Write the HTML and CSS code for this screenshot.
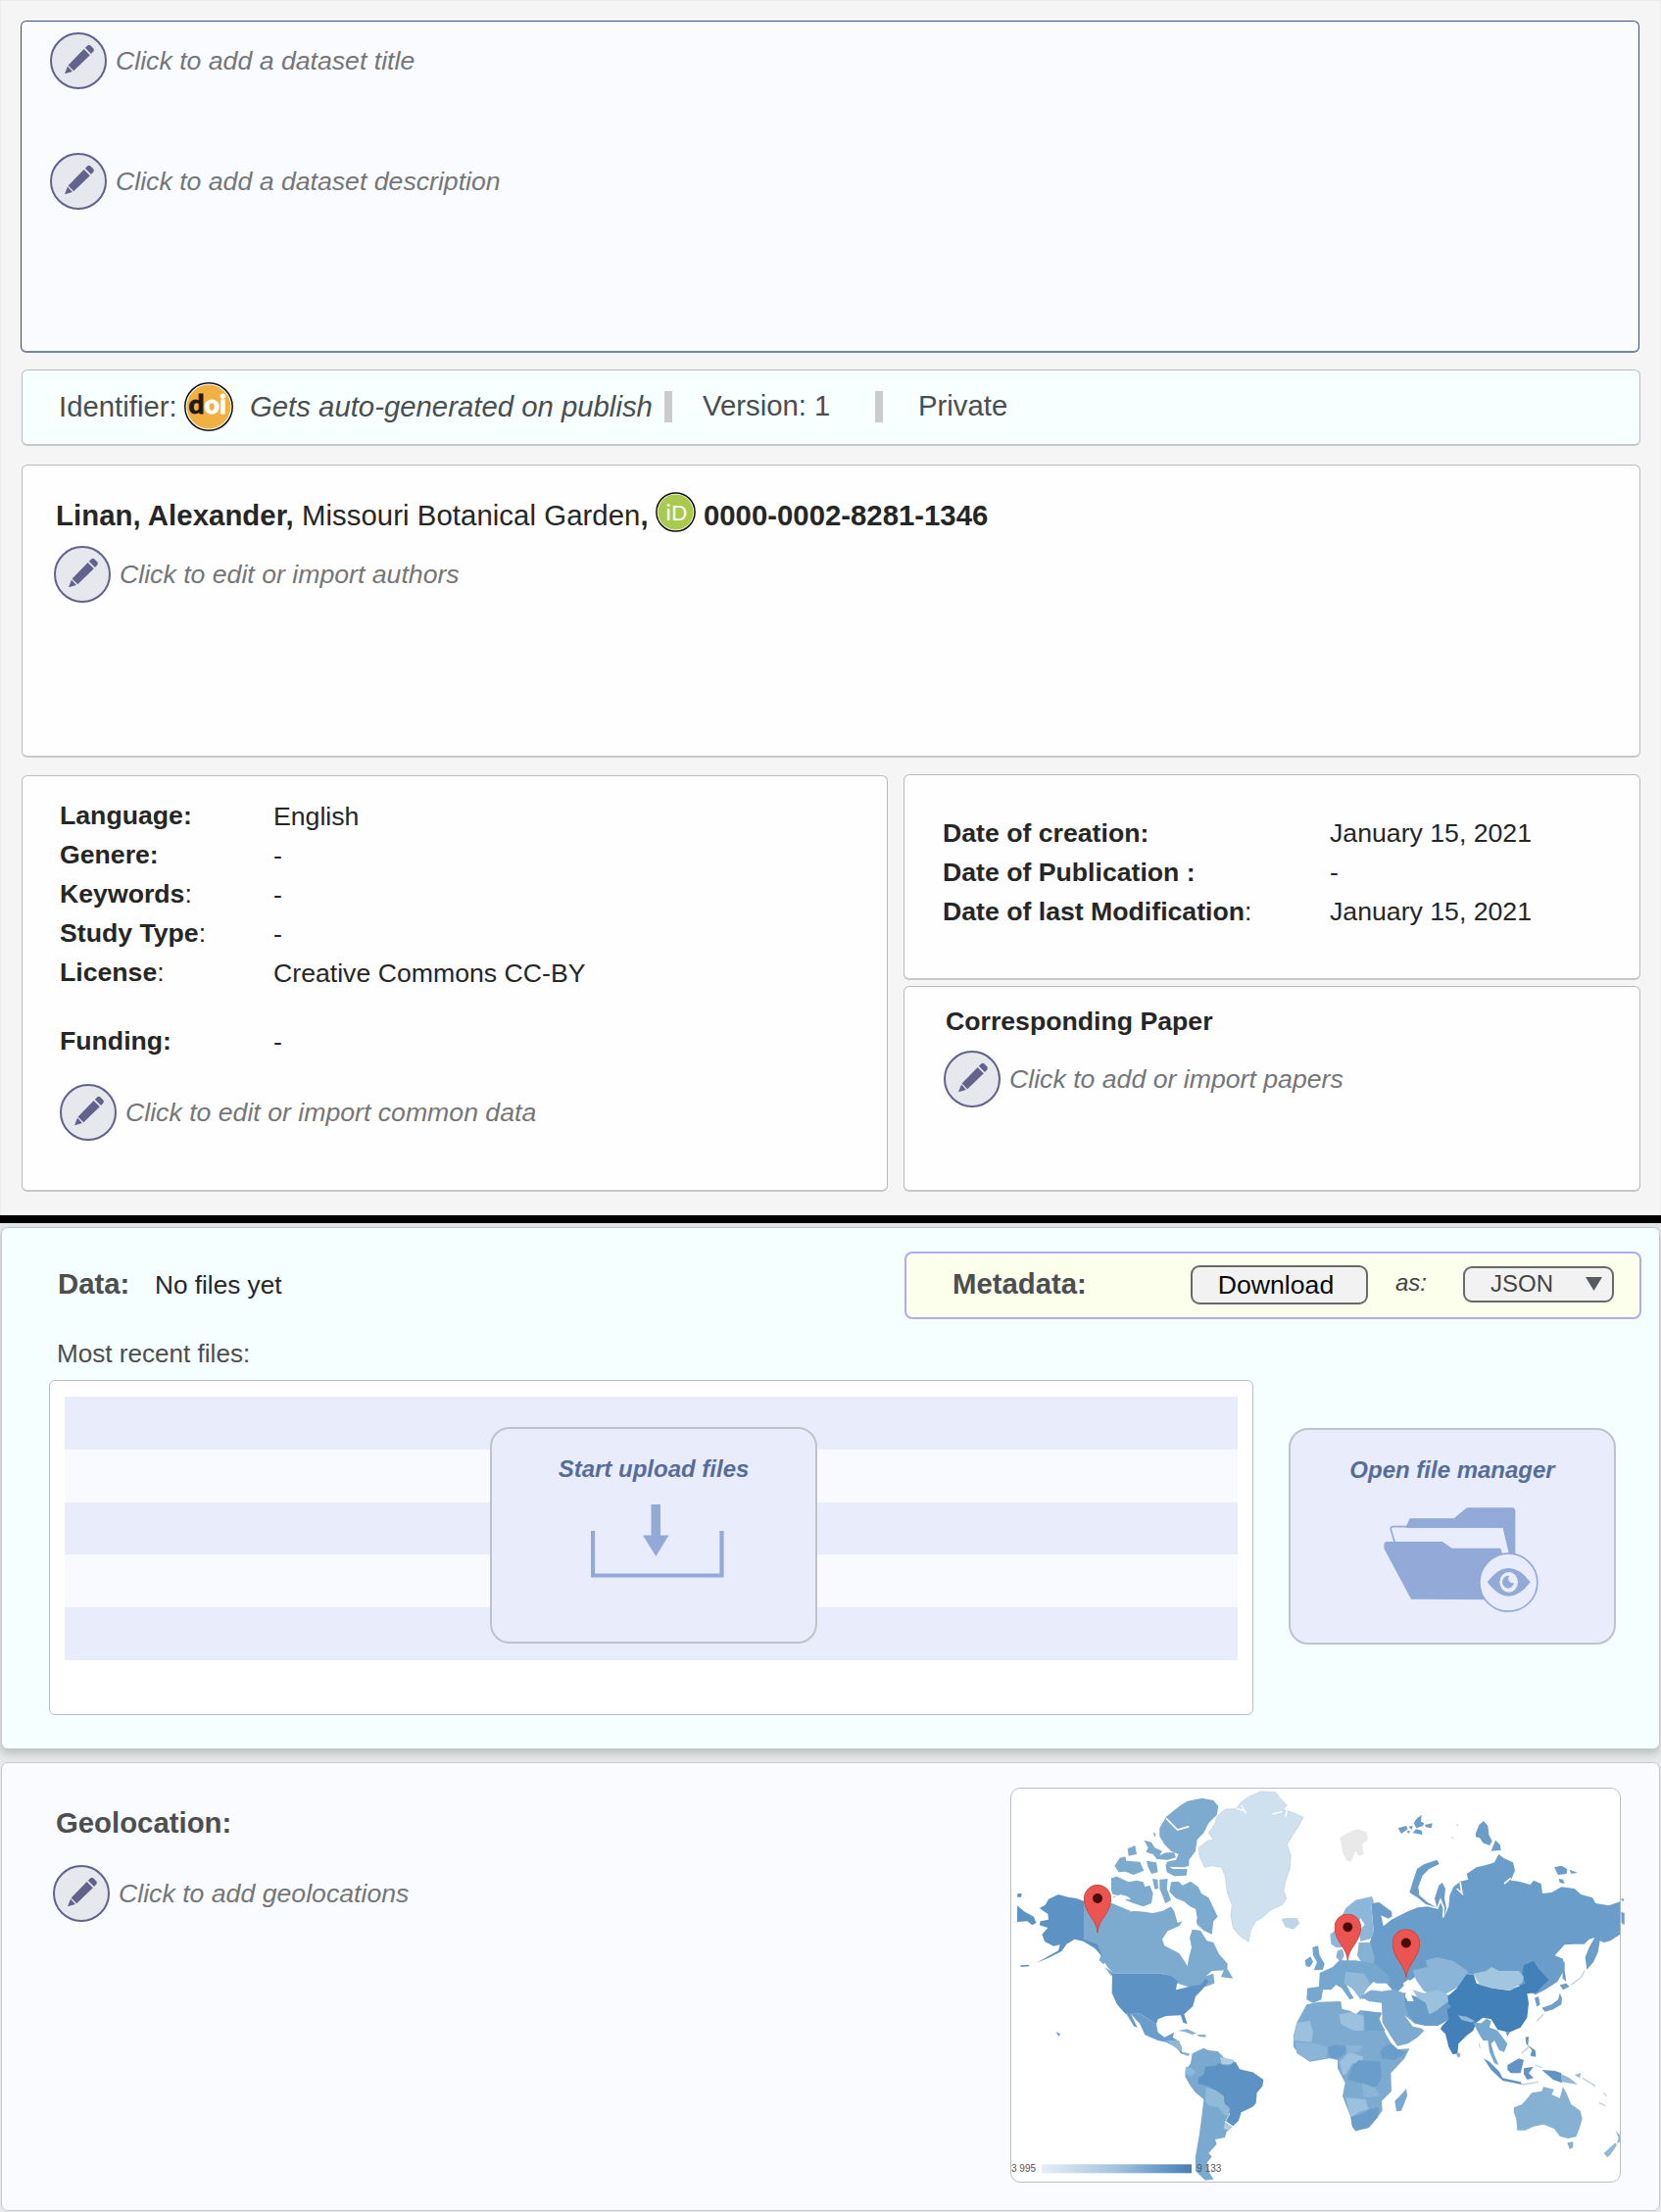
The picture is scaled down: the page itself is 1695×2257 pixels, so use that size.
FILE: index.html
```html
<!DOCTYPE html>
<html lang="en">
<head>
<meta charset="utf-8">
<title>Dataset</title>
<link rel="stylesheet" href="styles.css">
</head>
<body>
<svg class="defs" width="0" height="0" aria-hidden="true">
  <symbol id="pencil" viewBox="0 0 58 58">
    <path d="M15 42.200 18 34.600 22.900 39.900Z"/>
    <path d="M18.600 33.400 34.600 17 40.800 23.200 24.200 39.200Z"/>
    <path d="M35.800 15.800 38.500 13.200Q39.800 12.200 41.200 13.200L44.400 16.600Q45.400 18 44.400 19.300L42 22Z"/>
  </symbol>
  <symbol id="pin" viewBox="0 0 84 148">
    <path d="M42 147C40 105 1 90 1 42A41 41 0 0 1 83 42C83 90 44 105 42 147Z" fill="#eb5450" stroke="#c94a45" stroke-width="3"/>
    <circle cx="42" cy="42" r="15" fill="#4a0a06"/>
  </symbol>
</svg>

<header class="summary">
  <section class="card intro">
    <div class="edit"><button class="round" aria-label="Edit title"><svg><use href="#pencil"/></svg></button><em>Click to add a dataset title</em></div>
    <div class="edit"><button class="round" aria-label="Edit description"><svg><use href="#pencil"/></svg></button><em>Click to add a dataset description</em></div>
  </section>

  <section class="card identifier">
    <span class="id-label">Identifier:</span>
    <svg class="doi" viewBox="0 0 50 50">
      <circle cx="25" cy="25" r="24.2" fill="#fff" stroke="#111" stroke-width="1.5"/>
      <circle cx="25" cy="25" r="22.4" fill="#f0b042"/>
      <text x="4.500" y="32" font-size="27" textLength="16" lengthAdjust="spacingAndGlyphs" fill="#201a12" stroke="#201a12">d</text>
      <text x="20.500" y="32" font-size="27" textLength="22.500" lengthAdjust="spacingAndGlyphs" fill="#fff" stroke="#fff">oi</text>
    </svg>
    <em class="id-value">Gets auto-generated on publish</em>
    <i class="bar"></i>
    <span class="version">Version: 1</span>
    <i class="bar"></i>
    <span class="privacy">Private</span>
  </section>

  <section class="card authors">
    <p class="author"><span><b>Linan, Alexander,</b> Missouri Botanical Garden<b>,</b></span>
      <svg class="orcid" viewBox="0 0 41 41">
        <circle cx="20.5" cy="20.5" r="19.6" fill="#fff" stroke="#111" stroke-width="1.5"/>
        <circle cx="20.5" cy="20.5" r="18" fill="#a9ca4c"/>
        <text x="10.3" y="29" font-size="24" fill="#fff">i</text>
        <text x="16" y="29" font-size="21.5" fill="#fff">D</text>
      </svg>
      <b>0000-0002-8281-1346</b></p>
    <div class="edit"><button class="round" aria-label="Edit authors"><svg><use href="#pencil"/></svg></button><em>Click to edit or import authors</em></div>
  </section>

  <div class="details">
    <section class="card common">
      <dl class="facts">
        <dt>Language:</dt><dd>English</dd>
        <dt>Genere:</dt><dd>-</dd>
        <dt>Keywords<span>:</span></dt><dd>-</dd>
        <dt>Study Type<span>:</span></dt><dd>-</dd>
        <dt>License<span>:</span></dt><dd>Creative Commons CC-BY</dd>
        <dt class="apart">Funding:</dt><dd class="apart">-</dd>
      </dl>
      <div class="edit"><button class="round" aria-label="Edit common data"><svg><use href="#pencil"/></svg></button><em>Click to edit or import common data</em></div>
    </section>
    <div class="side">
      <section class="card dates">
        <dl class="facts">
          <dt>Date of creation:</dt><dd>January 15, 2021</dd>
          <dt>Date of Publication :</dt><dd>-</dd>
          <dt>Date of last Modification<span>:</span></dt><dd>January 15, 2021</dd>
        </dl>
      </section>
      <section class="card paper">
        <h2>Corresponding Paper</h2>
        <div class="edit"><button class="round" aria-label="Edit papers"><svg><use href="#pencil"/></svg></button><em>Click to add or import papers</em></div>
      </section>
    </div>
  </div>
</header>

<main class="lower">
  <section class="panel data">
    <div class="data-head">
      <h2>Data:</h2>
      <span class="status">No files yet</span>
      <div class="metadata">
        <h2>Metadata:</h2>
        <button class="download">Download</button>
        <em>as:</em>
        <button class="format">JSON<svg viewBox="0 0 17 14"><path d="M0 0H17L8.5 14Z"/></svg></button>
      </div>
    </div>
    <p class="recent">Most recent files:</p>
    <div class="files-row">
      <div class="files">
        <ul class="rows"><li></li><li></li><li></li><li></li><li></li></ul>
        <button class="action upload">Start upload files
          <svg viewBox="0 0 136 76">
            <path d="M2 27V72.500H133.500V27" fill="none" stroke="#93a9d8" stroke-width="4.200"/>
            <path d="M61.500 0H71V31.500H79.500L66.300 53 53 31.500H61.500Z" fill="#93a9d8"/>
          </svg>
        </button>
      </div>
      <button class="action manager">Open file manager
        <svg viewBox="97 114 474 324">
          <path d="M166 172 177 148H312L348 118Q352 115 358 115H490Q500 116 500 126V260H480L462 178H166Z" fill="#93a9d8"/>
          <path d="M130 219 119 182Q117 173 126 173H170" fill="none" stroke="#93a9d8" stroke-width="5"/>
          <path d="M127 178H461L480 254H458L455 238H306L278 218H134Z" fill="#e9edfb"/>
          <path d="M106 219H277L306 239H455L462 262 440 397 181 395 98 240V227Q99 219 106 219Z" fill="#93a9d8"/>
          <circle cx="479" cy="344" r="88.500" fill="#e9edfb" stroke="#93a9d8" stroke-width="5"/>
          <path d="M414 343Q446 300 480 300T546 343Q514 386 480 386T414 343Z" fill="#93a9d8"/>
          <ellipse cx="480" cy="343" rx="28" ry="31" fill="#e9edfb"/>
          <path d="M482 324A18 19 0 1 0 496 345 13 13 0 0 1 482 324Z" fill="#93a9d8"/>
        </svg>
      </button>
    </div>
  </section>

  <section class="panel geo">
    <div class="geo-left">
      <h2>Geolocation:</h2>
      <div class="edit"><button class="round" aria-label="Edit geolocations"><svg><use href="#pencil"/></svg></button><em>Click to add geolocations</em></div>
    </div>
    <div class="map">
      <svg viewBox="36 45 1863 1201">
        <defs><linearGradient id="scale"><stop offset="0" stop-color="#e6eef7"/><stop offset=".5" stop-color="#a3c2de"/><stop offset="1" stop-color="#467fb4"/></linearGradient></defs>
        <!-- Americas -->
        <g fill="#7dabd0">
          <path d="M490 165 510 130 550 98 575 82 620 73 655 80 670 98 665 125 640 150 625 180 605 200 600 235 580 262 580 280 565 285 510 283 512 268 540 262 548 245 525 235 505 215 490 190Z"/>
          <path d="M508 275 530 290 575 290 572 310 535 312 512 300Z"/>
          <path d="M442 202 465 208 475 225 498 235 490 248 510 240 535 240 540 255 515 262 482 260 470 245 448 238 455 225ZM392 228 415 218 420 245 395 250ZM352 280 368 256 385 252 388 265 430 268 442 295 410 308 385 298 365 300ZM450 265 480 270 485 300 465 305 455 285ZM470 178 478 182 476 195Z"/>
          <path d="M342 318 360 313 395 330 420 325 440 330 445 345 460 340 470 365 465 395 440 405 410 395 385 385 395 375 370 368 350 378 342 355ZM468 320 484 322 486 350 475 352ZM490 322 515 320 512 350 525 385 508 395 498 370 490 350Z"/>
          <path d="M525 330 548 328 560 340 585 328 608 345 618 365 640 378 668 436 655 450 650 490 625 478 605 460 600 440 580 440 590 410 565 390 540 380 520 360Z"/>
          <path d="M258 385 300 400 345 395 400 418 430 420 470 425 500 418 525 405 535 420 545 455 560 450 550 465 515 480 498 505 505 525 550 548 568 575 575 588 580 560 588 530 582 500 590 475 615 478 635 510 655 515 672 550 698 580 697 600 650 602 632 618 655 610 658 640 632 650 610 655 575 650 545 640 500 610H350L330 590 302 540 258 512Z"/>
          <path d="M690 592 700 600 715 625 690 622 678 620Z"/>
          <path d="M310 555 325 575 318 582 305 570ZM322 590 350 608 342 618Z"/>
        </g>
        <path d="M570 400 600 412 605 440 600 460 575 465 568 435Z" fill="#fff"/>
        <path d="M345 370 400 382M400 418 440 410M510 135 545 170 580 160" fill="none" stroke="#fff" stroke-width="5"/>
        <g fill="#5c93c4">
          <path d="M258 388 235 380 210 376 180 368 150 382 140 400 122 410 148 428 150 445 125 450 122 462 148 470 130 490 138 512 165 526 185 522 180 540 112 578 150 562 190 542 205 520 230 505 258 512 290 530 315 560 300 520 258 505Z"/>
          <path d="M54 402 75 420 105 436 112 455 100 462 85 450 54 452ZM54 366 68 365 66 376 55 376ZM172 788 186 795 182 802ZM64 585 92 583 90 588 66 590Z"/>
          <path d="M345 610H495L525 618 545 632 540 660 560 655 590 648 615 645 632 625 640 635 620 660 600 680 592 710 565 735 575 765 562 760 555 738 510 740 485 750 480 765 450 745 430 733H385L360 705 344 670Z"/>
        </g>
        <path d="M386 730 430 733 450 745 480 765 485 790 505 805 535 790 530 805 545 815 557 832 558 850 582 855 578 862 555 855 540 835 510 820 485 815 445 798 430 765 402 733 422 775 412 772Z" fill="#6a9dca"/>
        <path d="M510 815 550 815 560 850 582 856 574 862 540 838Z" fill="#8fb7d8"/>
        <path d="M545 785 575 780 603 793 590 797 565 788ZM605 797 632 797 630 805 610 803Z" fill="#88b2d5"/>
        <path d="M590 855 625 838 640 845 668 848 690 870 725 882 728 905 640 935 655 965 700 1010 705 1035 690 1065 712 1080 695 1095 690 1112 660 1118 665 1132 640 1160 650 1170 635 1190 640 1215 655 1240 630 1243 600 1215 600 1170 612 1100 620 1040 625 995 600 975 582 950 568 925 570 905 585 885Z" fill="#7aa9cf"/>
        <path d="M630 895 660 893 670 885 700 893 718 880 728 890 735 903 775 912 808 935 805 955 788 975 785 1008 775 1018 740 1035 732 1060 715 1077 693 1062 705 1040 700 1018 687 1010 685 985 660 968 640 955 608 948 608 930 625 920Z" fill="#5c93c4"/>
        <path d="M632 958 655 965 685 985 690 1010 705 1022 700 1050 685 1040 670 1018 640 1015 630 1000Z" fill="#91bad9"/>
        <path d="M675 865 690 868 720 875 710 888 680 888ZM690 1066 712 1078 700 1090 686 1085Z" fill="#b0cde4"/>
        <path d="M570 895 590 900 600 912 585 925 568 915Z" fill="#8fb9da"/>
        <path d="M765 68 800 53 845 55 860 75 880 95 868 108 900 118 930 132 912 165 895 190 880 215 892 250 888 290 875 330 870 355 878 380 865 400 830 415 810 435 785 450 770 475 762 513 735 495 715 470 708 430 712 400 698 365 690 310 680 285 650 280 628 285 612 250 610 225 635 205 655 200 640 180 660 150 665 130 690 108 725 105 740 85Z" fill="#cfe1ee" stroke="#b6cfe0" stroke-width="2"/>
        <path d="M740 95 755 120M725 105 750 112M835 122 865 114M880 110 876 130" fill="none" stroke="#fff" stroke-width="4"/>
        <path d="M862 443 878 440 912 440 918 458 900 475 875 468Z" fill="#bed6e8"/>

        <!-- Europe, Africa, Asia and Oceania -->
        <g transform="translate(900)">
          <path d="M142 195 165 180 195 168 225 178 228 200 210 215 215 245 200 250 190 235 175 268 160 262 150 235Z" fill="#e9e9e9"/>
          <g fill="#6a9dc9">
            <path d="M320 165 345 158 350 168 330 182ZM352 160 365 158 362 170ZM368 150 378 135 392 125 390 145 400 150 396 158 376 165ZM402 155 425 150 422 165 405 162ZM345 175 356 172 355 182ZM365 180 375 168 392 172 395 186 380 182Z"/>
            <path d="M558 180 568 155 582 143 595 158 598 185 608 205 600 218 580 210 570 195 558 192ZM605 235 618 202 632 215 635 232Z"/>
            <path d="M355 362 365 330 378 290 400 275 440 262 446 275 415 290 395 310 382 345 385 370 410 392 438 408 405 398 380 378Z"/>
            <path d="M798 285 820 280 838 290 836 305 810 308ZM845 292 870 302 850 304ZM812 320 825 322 830 335 815 332Z"/>
            <path d="M238 395 262 392 300 420 302 435 290 442 268 432 275 465 300 445 320 435 350 420 380 408 410 405 440 412 432 380 445 340 455 332 465 350 462 380 468 410 460 440 475 405 478 370 490 345 510 328 535 322 530 305 560 285 590 278 615 270 628 245 645 258 672 270 678 295 665 325 690 328 725 338 735 325 758 335 762 365 790 362 820 345 860 350 880 368 915 378 925 395 965 402 1000 390V490L970 510 950 515 938 510 932 545 918 575 898 598 893 560 905 530 922 500 905 505 890 520 860 520 830 522 800 555 825 565 828 600 808 635 770 660 740 675 700 650 600 620 520 610 400 600 345 640 320 665 280 655 240 625 230 580 232 520 245 480Z"/>
            <path d="M1003 422 1013 424 1013 462 1004 455ZM1004 380 1012 382 1010 388 1004 387ZM822 572 830 575 830 600 835 635 824 625Z"/>
          </g>
          <path d="M440 412 450 385 460 410 458 438M510 330 516 365 500 350M645 335 665 318" fill="none" stroke="#fff" stroke-width="5"/>
          <path d="M112 490 125 480 145 440 160 410 190 385 240 374 246 390 238 400 245 480 240 502 205 512 200 480 218 460 205 440 185 490 180 530 168 545 155 530 130 530 115 520Z" fill="#8db7da"/>
          <path d="M135 540 150 535 155 555 145 575 130 560ZM200 515 235 515 248 560 245 585 210 580 195 555Z" fill="#86b2d6"/>
          <path d="M58 530 75 525 80 555 95 580 90 598 62 600 72 575 60 555ZM35 570 52 558 60 575 50 590 38 588Z" fill="#72a4cd"/>
          <path d="M80 608 120 590 140 570 190 570 250 580 290 615 295 640 260 645 245 635 225 655 205 655 215 690 200 680 180 655 160 640 175 670 185 685 172 690 148 655 130 645 115 660 90 660 85 690 60 700 40 690 42 655 78 650Z" fill="#76a7ce"/>
          <path d="M160 605 215 610 235 640 205 690 180 655 155 640Z" fill="#91bad9"/>
          <path d="M238 660 265 655 310 660 340 670 390 690 440 690 470 725 500 740 440 770 400 770 375 765 400 785 380 805 350 825 318 832 300 805 272 760 270 700 230 695 205 680 225 668Z" fill="#7caad1"/>
          <path d="M340 668 400 690 460 710 460 760 440 770 400 768 370 762 350 735 340 700Z" fill="#6a9cca"/>
          <path d="M340 738 372 764 400 770 394 778 365 772Z" fill="#fff"/>
          <path d="M365 600 410 590 405 570 440 560 490 572 530 600 540 615 515 645 480 665 450 680 400 665 375 630Z" fill="#8bb5d8"/>
          <path d="M365 660 400 670 440 660 485 680 470 705 440 725 415 735 405 700 380 685Z" fill="#9bc1de"/>
          <path d="M440 722 480 690 520 700 500 735 440 770 400 765 410 740Z" fill="#6a9cca"/>
          <path d="M335 640 352 628 360 635 352 655 362 680 368 695 350 695 342 680 345 660ZM232 660 245 640 285 640 302 660 270 664Z" fill="#fff"/>
          <path d="M472 680 500 655 530 612 552 615 560 640 610 655 660 662 710 640 700 615 705 585 735 572 750 595 782 630 760 650 745 668 715 672 720 700 715 745 695 775 660 790 625 782 605 750 580 745 560 760 520 750 495 720 475 705Z" fill="#4180b9"/>
          <path d="M550 610 590 602 605 590 630 602 690 602 705 620 700 638 665 662 610 655 570 645Z" fill="#a3c6e0"/>
          <path d="M455 770 475 750 470 720 495 705 520 745 560 760 550 785 530 800 505 825 502 855 488 858 475 835 465 795 450 780Z" fill="#437fb8"/>
          <path d="M503 738 530 742 555 755 545 760 515 752Z" fill="#92b7d7"/>
          <path d="M550 760 575 762 590 748 605 755 600 775 625 785 640 805 655 825 645 850 630 845 615 815 605 825 615 860 628 890 615 885 600 850 595 815 580 815 565 790Z" fill="#79a8cf"/>
          <path d="M582 870 600 880 630 910 640 930 695 942 700 950 640 938 605 905ZM655 890 690 870 705 875 695 915 665 915 655 905ZM705 900 735 895 720 915 735 930 715 935 705 918ZM760 905 800 908 820 915 822 945 795 935ZM710 805 720 803 718 830 740 845 742 865 725 862 730 845 712 825ZM650 788 662 790 655 803Z" fill="#6094c4"/>
          <path d="M820 918 845 930 870 950 840 945 822 942ZM860 920 880 915 876 930Z" fill="#92b9d9"/>
          <path d="M760 715 790 705 810 690 815 670 822 685 820 705 795 720 770 727ZM815 645 835 640 845 650 825 660ZM738 685 750 680 755 705 745 712Z" fill="#6d9fca"/>
          <path d="M850 645 880 622 892 600M698 855 720 835M885 930 925 955M950 975 958 985M935 1005 955 1015M745 755 765 735M740 890 760 898M700 950 750 942" fill="none" stroke="#bed1e1" stroke-width="4"/>
          <path d="M675 1020 700 1010 730 975 760 970 765 957 798 965 790 980 815 992 825 957 835 975 850 1010 878 1030 884 1055 875 1085 865 1110 840 1115 815 1108 798 1085 765 1072 735 1078 710 1090 685 1090 682 1055 674 1035ZM838 1128 856 1125 856 1142 845 1148Z" fill="#86b1d3"/>
          <path d="M985 1090 1000 1105 1000 1125 990 1130 995 1112ZM950 1160 985 1128 990 1135 970 1165 960 1173Z" fill="#93b9d8"/>
          <path d="M40 705 75 697 145 695 148 718 175 725 190 735 205 722 270 730 262 750 285 800 300 825 320 842 355 840 340 870 298 915 300 970 270 1000 272 1030 245 1065 230 1082 190 1092 180 1080 175 1050 150 985 158 945 135 900 135 875 110 870 50 880 20 860 0 835 0 800 10 760Z" fill="#7caad0"/>
          <path d="M215 725 270 730 262 750 280 785 222 785Z" fill="#6fa2cc"/>
          <path d="M10 760 50 755 60 790 55 820 0 815ZM140 735 175 728 215 740 215 785 185 785 145 765ZM160 990 220 995 230 1025 200 1035 175 1050ZM140 880 170 850 215 865 210 880 180 885 160 920 150 920Z" fill="#9bc1de"/>
          <path d="M105 835 130 828 160 832 158 855 135 872 110 865ZM275 835 300 825 318 842 345 850 310 875 270 870 265 850ZM180 895 200 875 265 880 270 925 255 955 225 960 205 945 165 935ZM175 1050 210 1040 235 1025 262 1020 258 1050 230 1082 190 1092 180 1078Z" fill="#6a9dca"/>
          <path d="M5 820 70 825 105 835 100 868 50 878 10 855ZM160 830 215 830 200 850 165 855ZM210 945 250 960 265 985 215 990Z" fill="#8bb5d7"/>
          <path d="M310 1000 335 975 345 962 348 985 330 1030 315 1032Z" fill="#78a8cf"/>
          <path d="M500 855 510 855 508 866 502 864ZM568 825 571 838M485 192 490 198M498 153 504 158" fill="#8aa9c0" stroke="#8aa9c0" stroke-width="2"/>
        </g>
        <rect x="128" y="1194" width="460" height="27" fill="url(#scale)"/>
        <text x="36" y="1218">3 995</text>
        <text x="604" y="1218">9 133</text>
        <use href="#pin" x="258" y="338" width="84" height="148"/>
        <use href="#pin" x="1025" y="427" width="82" height="144"/>
        <use href="#pin" x="1202" y="474" width="85" height="150"/>
      </svg>
    </div>
  </section>
</main>
</body>
</html>
```
FILE: styles.css
```css
* { box-sizing: border-box; margin: 0; padding: 0; }

body {
  width: 1695px;
  height: 2257px;
  overflow: hidden;
  background: #f5f5f5;
  color: #262626;
  font: 26.67px/40px "Liberation Sans", Arial, sans-serif;
}

.defs { position: absolute; }
button { font: inherit; color: inherit; }

.summary {
  height: 1240px;
  padding: 20px 20px 0 20px;
  border: 1px solid #ebebeb;
  background: #f5f5f5;
}

.card {
  margin-left: 1px;
  background: #fefefe;
  border: 1px solid #b9bcbc;
  border-bottom: 2px solid #c6c8c8;
  border-radius: 6px;
}

.edit { display: flex; align-items: center; gap: 9px; height: 58px; color: #747678; }
.round {
  width: 58px;
  height: 58px;
  border: 2px solid #62628c;
  border-radius: 50%;
  background: #e6e8ee;
  fill: #62628c;
}
.round svg { display: block; width: 58px; height: 58px; margin: -2px; }

.intro {
  width: 1652px;
  height: 339px;
  margin-left: 0;
  padding: 11px 0 0 29px;
  background: #f9fbff;
  border: 1px solid #3d5178;
  border-bottom: 2px solid #74849f;
}
.intro .edit + .edit { margin-top: 65px; }

.identifier {
  display: flex;
  align-items: center;
  width: 1652px;
  height: 78px;
  margin-top: 17px;
  padding: 0 0 2px 37px;
  background: #f7ffff;
  color: #4b4d4f;
  font-size: 29.33px;
}
.id-label { width: 128px; white-space: nowrap; }
.doi { width: 50px; height: 50px; font: 900 27px Lato, sans-serif; stroke-width: .8px; }
.id-value { width: 440px; padding-left: 17px; white-space: nowrap; }
.bar { width: 8px; height: 32px; background: #c9cbcd; }
.version { width: 207px; padding-left: 31px; margin-top: -2px; }
.privacy { padding-left: 36px; margin-top: -2px; }

.authors { width: 1652px; height: 299px; margin-top: 19px; padding: 26px 0 0 32px; }
.author { display: flex; align-items: center; height: 42px; font-size: 29.33px; white-space: nowrap; }
.author > span { width: 614px; padding: 7px 0 0 2px; letter-spacing: .06px; }
.author > b { padding: 7px 0 0 8px; }
.orcid { width: 41px; height: 41px; font-family: Lato, sans-serif; }
.authors .edit { margin-top: 14px; }

.details { display: flex; margin-top: 17px; }
.facts { display: grid; grid-template-columns: 218px 1fr; grid-auto-rows: 40px; }
.facts dt { font-weight: bold; white-space: nowrap; }
.facts dt span { font-weight: normal; }
.facts dd { padding-top: 1px; white-space: nowrap; }
.facts .apart { margin-top: 30px; }

.common { width: 886px; height: 425px; margin-top: 1px; padding: 20px 0 0 38px; }
.common .edit { margin-top: 54px; }

.side { margin-left: 15px; }
.side .card { width: 752px; }
.dates { height: 210px; padding: 39px 0 0 39px; }
.dates .facts { grid-template-columns: 395px 1fr; }
.dates .facts dd { padding-top: 0; }
.paper { height: 210px; margin-top: 6px; padding: 15px 0 0 40px; }
.paper h2 { margin-left: 2px; font-size: 26.67px; }
.paper .edit { margin-top: 10px; }

.lower {
  height: 1017px;
  padding: 4px 1px 0;
  border-top: 8px solid #000;
  background: #e6e8e9;
}

.panel { border: 1px solid #c5c9cb; border-radius: 7px; }
.panel h2 { color: #4c4e50; font-size: 29.33px; }

.data {
  height: 533px;
  padding: 24px 0 0 48px;
  background: #f5ffff;
  box-shadow: 0 4px 9px #b9bcbc;
}
.data-head { display: flex; height: 69px; }
.data-head > h2 { width: 90px; padding-left: 9px; line-height: 66px; }
.status { width: 783px; padding-left: 18px; font-size: 26.2px; line-height: 68px; }
.metadata {
  display: flex;
  width: 752px;
  height: 69px;
  padding: 12px 0 0 46px;
  border: 2px solid #aeacee;
  border-radius: 8px;
  background: #fcffec;
}
.metadata h2 { width: 244px; margin-top: -12px; padding-left: 1px; line-height: 62px; }
.metadata button { border: 2px solid #686a6a; border-radius: 9px; background: #f2f2f2; }
.download { width: 181px; height: 40px; padding-right: 7px; line-height: 34px; color: #0a0a0a; }
.metadata em { width: 97px; padding-left: 28px; font-size: 24px; line-height: 35px; color: #444; }
.metadata .format {
  display: flex;
  align-items: center;
  justify-content: space-between;
  width: 154px;
  height: 37px;
  margin-top: 1px;
  padding: 0 10px 2px 26px;
  font-size: 24px;
  color: #444;
}
.format svg { width: 17px; height: 14px; fill: #555b60; }

.recent { margin: 15px 0 7px 8px; color: #4c4e50; font-size: 26.1px; }
.files-row { display: flex; }
.files {
  position: relative;
  width: 1229px;
  height: 342px;
  padding: 16px 15px;
  border: 1px solid #bbbec0;
  border-radius: 6px;
  background: #fff;
}
.rows { height: 269px; list-style: none; }
.rows li { height: 53.8px; background: #f8faff; }
.rows li:nth-child(odd) { background: #e9edfb; }

.action {
  display: flex;
  flex-direction: column;
  align-items: center;
  width: 334px;
  height: 221px;
  padding-top: 21px;
  border: 2px solid #bfc2c8;
  border-radius: 20px;
  background: #e9edfb;
  color: #566d9c;
  font: italic bold 24px/40px "Liberation Sans", Arial, sans-serif;
}
.upload { position: absolute; left: 449px; top: 47px; }
.upload svg { width: 136px; height: 76px; margin: 16px 0 0 7px; }
.manager { margin: 49px 0 0 36px; }
.manager svg { width: 158px; height: 108px; margin: 18px 0 0 17px; }

.geo {
  display: flex;
  justify-content: space-between;
  height: 458px;
  margin-top: 13px;
  padding: 25px 39px 0 52px;
  background: #f9fbff;
}
.geo-left { padding-top: 16px; }
.geo h2 { padding-left: 3px; }
.geo .edit { margin-top: 23px; }
.map { width: 623px; height: 403px; border: 1px solid #bcbfc4; border-radius: 10px; background: #fff; }
.map svg { display: block; width: 621px; height: 401px; overflow: visible; }
.map text { font-size: 30px; fill: #555; }
```
